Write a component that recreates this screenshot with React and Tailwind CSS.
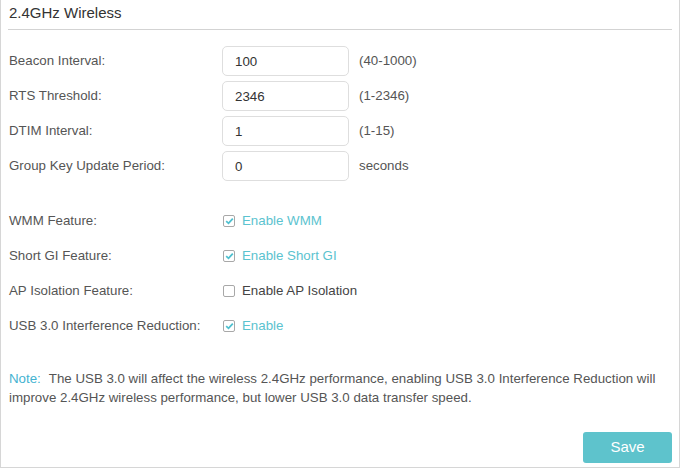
import React, { useState } from "react";

const fields = [
  { label: "Beacon Interval:", value: "100", hint: "(40-1000)" },
  { label: "RTS Threshold:", value: "2346", hint: "(1-2346)" },
  { label: "DTIM Interval:", value: "1", hint: "(1-15)" },
  { label: "Group Key Update Period:", value: "0", hint: "seconds" },
];

const features = [
  { id: "wmm", label: "WMM Feature:", text: "Enable WMM", on: true },
  { id: "sgi", label: "Short GI Feature:", text: "Enable Short GI", on: true },
  { id: "ap", label: "AP Isolation Feature:", text: "Enable AP Isolation", on: false },
  { id: "usb", label: "USB 3.0 Interference Reduction:", text: "Enable", on: true },
];

const Check = ({ on }) => (
  <span className="w-[12px] h-[12px] border border-[#a8a8a8] rounded-[2px] bg-white flex items-center justify-center">
    {on && (
      <svg width="9" height="8" viewBox="0 0 9 8">
        <path d="M1.2 4.2 L3.5 6.3 L7.8 1.6" fill="none" stroke="#4fc0cf" strokeWidth="1.8" />
      </svg>
    )}
  </span>
);

const App = () => {
  const [values, setValues] = useState(fields.map((f) => f.value));
  const [checks, setChecks] = useState(features.map((f) => f.on));

  return (
    <div
      className="w-[680px] h-[468px] bg-white border-x border-b border-[#d6d6d6] px-[7px] flex flex-col text-[13.3px] text-[#555]"
      style={{ fontFamily: '"Liberation Sans", Arial, sans-serif' }}
    >
      <div className="h-[30px] border-b border-[#d3d3d3] flex items-start pt-[2px] pl-[1px] text-[15px] text-[#333]">
        2.4GHz Wireless
      </div>

      <div className="mt-[16px] flex flex-col gap-[5px]">
        {fields.map((f, i) => (
          <div key={f.label} className="flex items-center h-[30px]">
            <span className="w-[214px] pl-[1px]">{f.label}</span>
            <input
              value={values[i]}
              onChange={(e) => {
                const v = [...values];
                v[i] = e.target.value;
                setValues(v);
              }}
              className="w-[127px] h-[30px] border border-[#dedede] rounded-[5px] px-[12px] text-[13.3px] text-[#333] outline-none"
            />
            <span className="ml-[10px]">{f.hint}</span>
          </div>
        ))}
      </div>

      <div className="mt-[22px] flex flex-col">
        {features.map((f, i) => (
          <div key={f.id} className="flex items-center h-[35px]">
            <span className="w-[215px] pl-[1px]">{f.label}</span>
            <button
              type="button"
              onClick={() => {
                const c = [...checks];
                c[i] = !c[i];
                setChecks(c);
              }}
              className="flex items-center gap-[7px]"
            >
              <Check on={checks[i]} />
              <span className={checks[i] ? "text-[#5bc3cf]" : "text-[#444]"}>{f.text}</span>
            </button>
          </div>
        ))}
      </div>

      <p className="mt-[26px] pl-[1px] leading-[19px] pr-[10px]">
        <span className="text-[#44b3d1] mr-[8px]">Note:</span>The USB 3.0 will affect the wireless 2.4GHz performance, enabling USB 3.0 Interference Reduction will improve 2.4GHz wireless performance, but lower USB 3.0 data transfer speed.
      </p>

      <div className="mt-auto mb-[4px] flex justify-end">
        <button className="w-[89px] h-[31px] rounded-[3px] bg-[#5ec3cc] text-white text-[15px]">Save</button>
      </div>
    </div>
  );
};

export default App;
